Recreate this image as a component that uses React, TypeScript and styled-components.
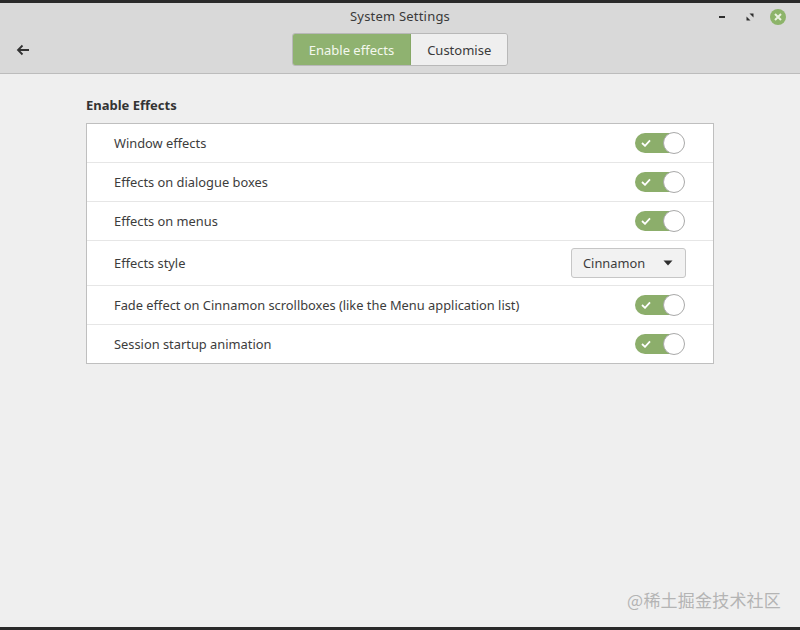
import styled, { createGlobalStyle } from 'styled-components';

const GlobalStyle = createGlobalStyle`
  html, body {
    margin: 0;
    padding: 0;
    background: #efefef;
  }
  * {
    box-sizing: border-box;
  }
`;

const Window = styled.div`
  position: relative;
  width: 800px;
  height: 630px;
  display: flex;
  flex-direction: column;
  font-family: 'Noto Sans', 'DejaVu Sans', sans-serif;
  color: #3c3c3c;
  overflow: hidden;
`;

const Edge = styled.div`
  height: 3px;
  flex: none;
  background: #2a2a2a;
`;

const Header = styled.header`
  flex: none;
  height: 71px;
  background: #d9d9d9;
  border-bottom: 1px solid #bcbcbc;
  display: flex;
  flex-direction: column;
`;

const TitleBar = styled.div`
  height: 25px;
  display: grid;
  grid-template-columns: 1fr auto 1fr;
  align-items: center;
`;

const Title = styled.div`
  grid-column: 2;
  font-size: 13px;
  letter-spacing: 0.2px;
  color: #3a3a3a;
`;

const Controls = styled.div`
  grid-column: 3;
  justify-self: end;
  display: flex;
  align-items: center;
  gap: 12px;
  padding-right: 14px;
  padding-top: 2px;
`;

const ControlButton = styled.div`
  width: 16px;
  height: 16px;
  display: flex;
  align-items: center;
  justify-content: center;
`;

const CloseButton = styled(ControlButton)`
  border-radius: 50%;
  background: #8db46a;
`;

const Toolbar = styled.div`
  flex: 1;
  display: grid;
  grid-template-columns: 1fr auto 1fr;
  align-items: center;
  padding-bottom: 2px;
`;

const BackButton = styled.div`
  justify-self: start;
  padding-left: 16px;
  display: flex;
  align-items: center;
`;

const Segmented = styled.div`
  display: flex;
  border: 1px solid #b8b8b8;
  border-radius: 3px;
  overflow: hidden;
  height: 33px;
`;

const Segment = styled.div<{ $active?: boolean }>`
  display: flex;
  align-items: center;
  padding: 0 16px;
  font-size: 13px;
  background: ${(p) => (p.$active ? '#8fb270' : '#efefef')};
  color: ${(p) => (p.$active ? '#f4f8ee' : '#3a3a3a')};
  border-right: ${(p) => (p.$active ? '1px solid #86a866' : 'none')};
`;

const Content = styled.main`
  position: relative;
  flex: 1;
  background: #efefef;
  padding: 22px 86px 0 86px;
`;

const SectionTitle = styled.h2`
  margin: 0 0 9px;
  font-size: 13px;
  font-weight: 700;
  color: #333;
  line-height: 18px;
`;

const Panel = styled.div`
  width: 628px;
  background: #ffffff;
  border: 1px solid #bfbfbf;
`;

const Row = styled.div<{ $tall?: boolean }>`
  height: ${(p) => (p.$tall ? '45px' : '39px')};
  display: flex;
  align-items: center;
  justify-content: space-between;
  padding: 0 29px 0 27px;
  border-top: 1px solid #e6e6e6;
  &:first-child {
    border-top: none;
    height: 38px;
  }
`;

const Label = styled.span`
  font-size: 12.85px;
  color: #3c3c3c;
`;

const Switch = styled.div`
  position: relative;
  width: 49px;
  height: 20px;
  border-radius: 10px;
  background: #8cae6b;
  display: flex;
  align-items: center;
  padding-left: 6px;
`;

const Knob = styled.div`
  position: absolute;
  right: -1px;
  top: -1px;
  width: 22px;
  height: 22px;
  border-radius: 50%;
  background: #ffffff;
  border: 1px solid #a9a9a9;
`;

const Dropdown = styled.div`
  width: 115px;
  height: 30px;
  margin-right: -2px;
  border: 1px solid #c6c6c6;
  border-radius: 3px;
  background: #f2f2f2;
  display: flex;
  align-items: center;
  justify-content: space-between;
  padding: 0 12px 0 11px;
  font-size: 12.85px;
  color: #3c3c3c;
`;

const Watermark = styled.div`
  position: absolute;
  right: 19px;
  bottom: 15px;
  font-family: 'Noto Sans CJK SC', 'Noto Sans', sans-serif;
  font-size: 17px;
  color: #b4b4b4;
  letter-spacing: 0.2px;
`;

const Check = () => (
  <svg width="10" height="8" viewBox="0 0 10 8">
    <path d="M1 4 L4 6.8 L9 1.3" fill="none" stroke="#ffffff" strokeWidth="1.8" />
  </svg>
);

const Toggle = () => (
  <Switch>
    <Check />
    <Knob />
  </Switch>
);

const rows: { label: string; kind: 'toggle' | 'select' }[] = [
  { label: 'Window effects', kind: 'toggle' },
  { label: 'Effects on dialogue boxes', kind: 'toggle' },
  { label: 'Effects on menus', kind: 'toggle' },
  { label: 'Effects style', kind: 'select' },
  { label: 'Fade effect on Cinnamon scrollboxes (like the Menu application list)', kind: 'toggle' },
  { label: 'Session startup animation', kind: 'toggle' },
];

const App = () => (
  <>
    <GlobalStyle />
    <Window>
      <Edge />
      <Header>
        <TitleBar>
          <Title>System Settings</Title>
          <Controls>
            <ControlButton>
              <svg width="10" height="10" viewBox="0 0 10 10">
                <rect x="2" y="4" width="6" height="2" fill="#2e2e2e" />
              </svg>
            </ControlButton>
            <ControlButton>
              <svg width="10" height="10" viewBox="0 0 10 10">
                <path d="M4.5 1.5 L8.5 1.5 L8.5 5.5 Z" fill="#2e2e2e" />
                <path d="M1.5 4.5 L1.5 8.5 L5.5 8.5 Z" fill="#2e2e2e" />
              </svg>
            </ControlButton>
            <CloseButton>
              <svg width="8" height="8" viewBox="0 0 8 8">
                <path d="M1 1 L7 7 M7 1 L1 7" stroke="#eaf2e0" strokeWidth="2" />
              </svg>
            </CloseButton>
          </Controls>
        </TitleBar>
        <Toolbar>
          <BackButton>
            <svg width="14" height="12" viewBox="0 0 14 12">
              <path d="M13 6 H2.5 M6.5 1.5 L2 6 L6.5 10.5" fill="none" stroke="#333" strokeWidth="1.8" />
            </svg>
          </BackButton>
          <Segmented>
            <Segment $active>Enable effects</Segment>
            <Segment>Customise</Segment>
          </Segmented>
        </Toolbar>
      </Header>
      <Content>
        <SectionTitle>Enable Effects</SectionTitle>
        <Panel>
          {rows.map((r) => (
            <Row key={r.label} $tall={r.kind === 'select'}>
              <Label>{r.label}</Label>
              {r.kind === 'toggle' ? (
                <Toggle />
              ) : (
                <Dropdown>
                  <span>Cinnamon</span>
                  <svg width="10" height="6" viewBox="0 0 10 6">
                    <path d="M0.5 0.5 L9.5 0.5 L5 5.5 Z" fill="#2e2e2e" />
                  </svg>
                </Dropdown>
              )}
            </Row>
          ))}
        </Panel>
        <Watermark>@稀土掘金技术社区</Watermark>
      </Content>
      <Edge />
    </Window>
  </>
);

export default App;
